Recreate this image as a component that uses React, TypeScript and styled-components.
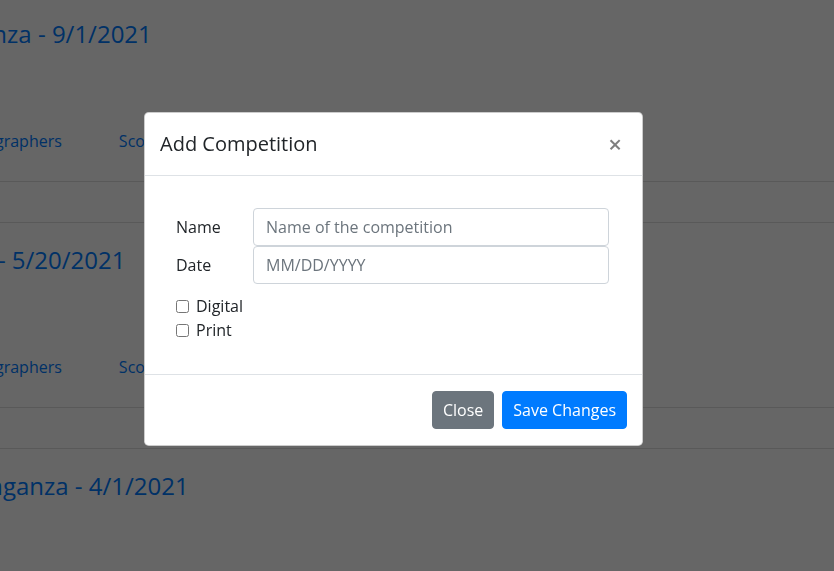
import styled, { createGlobalStyle } from "styled-components";

const GlobalStyle = createGlobalStyle`
  html, body {
    margin: 0;
    padding: 0;
    background: #fff;
    overflow: hidden;
  }
  body {
    font-family: "Open Sans", "Noto Sans", Arial, sans-serif;
    font-size: 16px;
    color: #212529;
  }
  * {
    box-sizing: border-box;
  }
`;

const Page = styled.div`
  width: 1100px;
  margin: -4px 0 0 -181px;
`;

const Card = styled.section`
  border-top: 1px solid rgba(0, 0, 0, 0.125);
  border-bottom: 1px solid rgba(0, 0, 0, 0.125);
  padding: 22px 20px 28px;
  margin-bottom: 40px;
`;

const CardTitle = styled.h4`
  margin: 0 0 81px;
  font-size: 24px;
  line-height: 29px;
  font-weight: 500;
  color: #007bff;
  white-space: nowrap;
`;

const LinkRow = styled.nav`
  display: flex;
  gap: 57px;
  padding-left: 3px;
  line-height: 24px;
`;

const CardLink = styled.a`
  color: #007bff;
  text-decoration: none;
`;

const Backdrop = styled.div`
  position: fixed;
  inset: 0;
  background: rgba(0, 0, 0, 0.6);
`;

const Dialog = styled.div`
  width: 499px;
  margin: 112px 0 0 144px;
  background: #fff;
  border: 1px solid rgba(0, 0, 0, 0.2);
  border-radius: 4.8px;
  display: flex;
  flex-direction: column;
`;

const Header = styled.header`
  display: flex;
  align-items: center;
  padding: 16px 16px 16px 15px;
  border-bottom: 1px solid #dee2e6;
`;

const Title = styled.h5`
  margin: 0;
  font-size: 20px;
  line-height: 30px;
  font-weight: 500;
  color: #212529;
`;

const CloseX = styled.button`
  margin-left: auto;
  padding: 0 4px 0 0;
  border: 0;
  background: transparent;
  font-family: inherit;
  font-size: 24px;
  line-height: 1;
  font-weight: 600;
  color: #000;
  opacity: 0.5;
  text-shadow: 0 1px 0 #fff;
  cursor: pointer;
`;

const Body = styled.div`
  padding: 32px 33px 32px 31px;
`;

const FieldRow = styled.label`
  display: grid;
  grid-template-columns: 77px 1fr;
  align-items: center;
`;

const FieldLabel = styled.span`
  font-size: 16px;
  line-height: 24px;
`;

const Input = styled.input`
  display: block;
  width: 100%;
  height: 38px;
  padding: 6px 12px;
  font-family: inherit;
  font-size: 16px;
  line-height: 24px;
  color: #495057;
  background: #fff;
  border: 1px solid #ced4da;
  border-radius: 4px;
  outline: none;

  &::placeholder {
    color: #6c757d;
  }
`;

const Checks = styled.div`
  margin-top: 10px;
`;

const CheckRow = styled.label`
  display: flex;
  align-items: center;
  gap: 7px;
  line-height: 24px;

  input {
    width: 13px;
    height: 13px;
    margin: 0;
  }
`;

const Footer = styled.footer`
  display: flex;
  justify-content: flex-end;
  gap: 8px;
  padding: 16px 15px;
  border-top: 1px solid #dee2e6;
`;

const Button = styled.button<{ $variant: "secondary" | "primary" }>`
  height: 38px;
  padding: 6px 10px;
  font-family: inherit;
  font-size: 16px;
  line-height: 24px;
  color: #fff;
  border: 1px solid ${(p) => (p.$variant === "primary" ? "#007bff" : "#6c757d")};
  background: ${(p) => (p.$variant === "primary" ? "#007bff" : "#6c757d")};
  border-radius: 4px;
  cursor: pointer;
`;

const competitions = [
  { name: "Fall Extravaganza", date: "9/1/2021" },
  { name: "Spring Classic", date: "5/20/2021" },
  { name: "Winter Extravaganza", date: "4/1/2021" },
];

export default function App() {
  return (
    <>
      <GlobalStyle />
      <Page>
        {competitions.map((c) => (
          <Card key={c.date}>
            <CardTitle>
              {c.name} - {c.date}
            </CardTitle>
            <LinkRow>
              <CardLink href="#">Entries</CardLink>
              <CardLink href="#">Photographers</CardLink>
              <CardLink href="#">Scores</CardLink>
            </LinkRow>
          </Card>
        ))}
      </Page>
      <Backdrop>
        <Dialog role="dialog" aria-modal="true">
          <Header>
            <Title>Add Competition</Title>
            <CloseX aria-label="Close">×</CloseX>
          </Header>
          <Body>
            <FieldRow>
              <FieldLabel>Name</FieldLabel>
              <Input placeholder="Name of the competition" />
            </FieldRow>
            <FieldRow>
              <FieldLabel>Date</FieldLabel>
              <Input placeholder="MM/DD/YYYY" />
            </FieldRow>
            <Checks>
              <CheckRow>
                <input type="checkbox" />
                Digital
              </CheckRow>
              <CheckRow>
                <input type="checkbox" />
                Print
              </CheckRow>
            </Checks>
          </Body>
          <Footer>
            <Button $variant="secondary">Close</Button>
            <Button $variant="primary">Save Changes</Button>
          </Footer>
        </Dialog>
      </Backdrop>
    </>
  );
}
